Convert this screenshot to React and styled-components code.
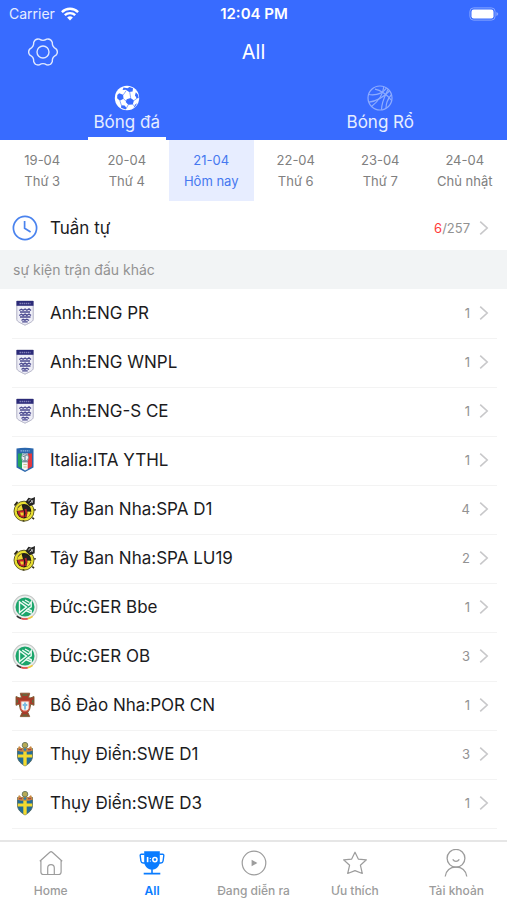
import React, { useState } from "react";
import styled, { createGlobalStyle } from "styled-components";

const colors = {
  primary: "#386bff",
  active: "#0a7cff",
  today: "#4678f0",
  todayBg: "#e7edff",
  text: "#1c1c1e",
  muted: "#808080",
  faint: "#929292",
  line: "#f3f3f3",
  section: "#f2f4f5",
  danger: "#ff3b3b",
};

const days = [
  { date: "19-04", label: "Thứ 3" },
  { date: "20-04", label: "Thứ 4" },
  { date: "21-04", label: "Hôm nay" },
  { date: "22-04", label: "Thứ 6" },
  { date: "23-04", label: "Thứ 7" },
  { date: "24-04", label: "Chủ nhật" },
];

const leagues = [
  { crest: "england", name: "Anh:ENG PR", count: 1 },
  { crest: "england", name: "Anh:ENG WNPL", count: 1 },
  { crest: "england", name: "Anh:ENG-S CE", count: 1 },
  { crest: "italy", name: "Italia:ITA YTHL", count: 1 },
  { crest: "spain", name: "Tây Ban Nha:SPA D1", count: 4 },
  { crest: "spain", name: "Tây Ban Nha:SPA LU19", count: 2 },
  { crest: "germany", name: "Đức:GER Bbe", count: 1 },
  { crest: "germany", name: "Đức:GER OB", count: 3 },
  { crest: "portugal", name: "Bồ Đào Nha:POR CN", count: 1 },
  { crest: "sweden", name: "Thụy Điển:SWE D1", count: 3 },
  { crest: "sweden", name: "Thụy Điển:SWE D3", count: 1 },
];

/* ---------- header icons ---------- */

const polar = (radius, deg) => {
  const a = (deg * Math.PI) / 180;
  return `${(15 + radius * Math.cos(a)).toFixed(2)} ${(15 + radius * Math.sin(a)).toFixed(2)}`;
};

// six rounded teeth with a shallow dip between each pair
const gearPath =
  [0, 60, 120, 180, 240, 300]
    .map(
      (deg, i) =>
        `${i === 0 ? `M${polar(13.4, deg - 14)}` : ""} A5 5 0 0 1 ${polar(13.4, deg + 14)} Q${polar(10.4, deg + 30)} ${polar(13.4, deg + 46)}`
    )
    .join(" ") + "Z";

const GearIcon = () => (
  <svg width="30" height="30" viewBox="0 0 30 30" fill="none" stroke="#dfe8ff" strokeWidth="1.4">
    <path d={gearPath} strokeLinejoin="round" />
    <circle cx="15" cy="15" r="6" />
  </svg>
);

const WifiIcon = () => (
  <svg width="18" height="14" viewBox="0 0 18 14" fill="none" stroke="#fff" strokeWidth="2.4">
    <path d="M0.9 5.1a11.6 11.6 0 0 1 16.2 0" />
    <path d="M3.8 8.2a7.5 7.5 0 0 1 10.4 0" />
    <path d="M9 13.6l-2.9-3a4.2 4.2 0 0 1 5.8 0z" fill="#fff" stroke="none" />
  </svg>
);

const BatteryIcon = () => (
  <svg width="30" height="14" viewBox="0 0 30 14" fill="none">
    <rect x="0.9" y="0.9" width="25.2" height="12.2" rx="3.6" stroke="#86a5ff" />
    <rect x="2.5" y="2.5" width="22" height="9" rx="2.2" fill="#fff" />
    <path d="M27.4 5v4c1.3-.5 1.8-1.2 1.8-2s-.5-1.5-1.8-2z" fill="#86a5ff" />
  </svg>
);

const FootballIcon = () => (
  <svg width="26" height="26" viewBox="0 0 26 26">
    <circle cx="13" cy="13" r="12.2" fill="#fff" />
    <g fill={colors.primary}>
      <path d="M12.7 14.2l4-1.3 3.3 2.6-1.3 4.1-4.5.2-2.5-2.7z" />
      <path d="M9.5 2.4l4 .8 2-1.2 3.5 1.2-.4 3.2-3.5.7-3.3-2.4-3.2.4z" />
      <path d="M5.2 8.3l3.9 1.5.4 3.9-3.6 2.1-2.8-2.6.2-3.1z" />
      <path d="M21.8 7.2l2.3 2.6.6 3.2-2 .5-1.7-3.3z" />
      <path d="M7.2 20.3l3.4.3 2.2 2.6-1.4 1.3-4.3-1.8z" />
      <path d="M21.6 19.2l1.7-1.3-1.9 3.4-2 1.4z" />
    </g>
    <path
      d="M9.3 9.9l2.8-4.2M9.4 13.8l2.5 2M16.7 12.9l-1-6M20 15.5l3-2.2M14.2 19.8l-1.7 3.2M5.9 15.8l1.5 4.5M18.6 19.6l2 1.3"
      stroke={colors.primary}
      strokeWidth=".6"
      fill="none"
    />
  </svg>
);

const BasketballIcon = () => (
  <svg width="26" height="26" viewBox="0 0 26 26" fill="none" stroke="#8eacff" strokeWidth="1.2">
    <circle cx="13" cy="13" r="12" />
    <path d="M1.5 9.5C9 10.5 16 8 19.5 3.2" />
    <path d="M2 17.2C11 16 18 10.5 22.4 6" />
    <path d="M4.5 21.5C11 16.5 16 11 16.8 1.8" />
    <path d="M8 4.2C13 5 20.5 9.5 24.6 15.5" />
    <path d="M14.5 24.8C14.5 17 17.5 12 21 4.5" />
    <path d="M19 23.2c0-5 1.5-9 5.2-13.2" />
  </svg>
);

/* ---------- list icons ---------- */

const ClockIcon = () => (
  <svg width="26" height="26" viewBox="0 0 26 26" fill="none" stroke="#4a83ee" strokeWidth="1.7">
    <circle cx="13" cy="13" r="11.6" />
    <path d="M12.6 6v7.3l6 3.7" />
  </svg>
);

const ChevronIcon = () => (
  <svg width="10" height="16" viewBox="0 0 10 16" fill="none" stroke="#c8c8ca" strokeWidth="1.6">
    <path d="M1.2 1.6L8.2 8l-7 6.400" />
  </svg>
);

const EnglandCrest = () => (
  <svg width="26" height="26" viewBox="0 0 26 26">
    <path d="M4.8 1h16.4v18.5c0 2-3.700 3.500-8.200 5.700-4.500-2.200-8.200-3.700-8.200-5.700z" fill="#eeeef7" stroke="#b0b0c4" strokeWidth="1" />
    <path d="M4.5 1h17v4.800h-17z" fill="#2b2a78" />
    <path d="M7.5 3.500h11" stroke="#8583bb" strokeWidth="1.300" strokeDasharray="1.500 .6" />
    <g stroke="#4a498f" strokeWidth="1.300" fill="none">
      <path d="M7.200 10.500l2.200-1.300 1.700 1 2-1.200 1.800 1.300 2.100-1.400 2 1.600M8 12h10" />
      <path d="M7.200 15.500l2.200-1.300 1.700 1.200 2-1.300 1.800 1.300 2.100-1.400 2 1.600M8 17h10.500" />
      <path d="M9.500 20.600l1.600-1.300 1.900.9 1.900-1 2.100 1.300M10.200 21.900h5.500" />
    </g>
  </svg>
);

const ItalyCrest = () => (
  <svg width="26" height="26" viewBox="0 0 26 26">
    <path d="M4.500 1.500Q13 .2 21.500 1.500v19L13 25l-8.500-4.500z" fill="#2b67ad" />
    <path d="M6 6.500h5V22l-5-2.600z" fill="#23a55b" />
    <path d="M10 6.500h6V22L13 23.500 10 21.500z" fill="#f5f7f5" />
    <path d="M15.700 6.500H20v13L15.700 22z" fill="#e2383f" />
    <path d="M8.500 3.900h9" stroke="#8fb6df" strokeWidth="1.300" strokeDasharray="1.500 .6" />
    <circle cx="13" cy="10.500" r="3.600" fill="#edf2f3" stroke="#5b7f91" strokeWidth=".8" />
    <path d="M10.800 9.500l3.800-1M13 9.500v4.500M10 14.800h6" stroke="#557083" strokeWidth="1" />
    <path d="M11.400 17.500h3.400M11.600 20h3" stroke="#c9bd83" strokeWidth=".9" />
  </svg>
);

const SpainCrest = () => (
  <svg width="26" height="26" viewBox="0 0 26 26">
    <circle cx="12" cy="15.200" r="10" fill="#e9df31" stroke="#55501c" strokeWidth=".9" />
    <circle cx="12" cy="15.200" r="7.200" fill="#1e1a18" />
    <path d="M5.500 12.500l4-3.900 1.500 5.600-5.800.7z" fill="#f0d934" />
    <path d="M11.500 8.700l6.500 2.600.4 4.400-6.900-1.200z" fill="#262220" />
    <path d="M5.500 15l6.500-.6v7.300c-3.500 0-6-2.500-6.500-6.700z" fill="#c3242b" />
    <path d="M15.500 15.500l3.500.3-2.100 4.800-2.600 1z" fill="#f2dd31" />
    <path d="M8 16.500h3.500v3H9z" fill="#ecd42f" />
    <path d="M13.500 13l1 4.500-1.500 3.500" stroke="#b5202b" strokeWidth="1.900" fill="none" />
    <path d="M13.500 6l3-4.200 3 .6 3.500-1.400-.4 7.300-4.900 2z" fill="#242424" />
    <path d="M16.300 5l2.300-1.900M17.700 7.200l3.500-2.700M19.600 4l.8 2.800" stroke="#d9d9d9" strokeWidth=".9" />
    <path d="M2.500 9.500l3-3.600M22.200 13.600l1.500.4M20.300 21.700l1.700 1.500M11.500 24.200v1.300" stroke="#302b16" strokeWidth="1.700" />
  </svg>
);

const GermanyCrest = () => (
  <svg width="26" height="26" viewBox="0 0 26 26">
    <circle cx="13" cy="13" r="11.800" fill="#eceeed" stroke="#c4c8c6" strokeWidth="1.200" />
    <circle cx="13" cy="13" r="9.500" fill="#1ba56b" />
    <g fill="none" stroke="#eefaf4" strokeWidth="1.400">
      <path d="M7.500 8v10.500l7-5.400z" />
      <path d="M10.300 7.200l6.400 4.200 2.500-3.600v5l-3.800 2.400 3.800 1.300v2.500l-5.500-2.400" />
      <path d="M9.500 20.500l5.700-4.800M13 6l4.500 2.500" />
    </g>
    <path d="M4.800 22.200a12 12 0 0 0 4.500 2.300" stroke="#333" strokeWidth="1.500" fill="none" />
    <path d="M9.300 24.500a12 12 0 0 0 6.500.2" stroke="#e23b3b" strokeWidth="1.500" fill="none" />
    <path d="M15.800 24.700a12 12 0 0 0 4.800-2.300" stroke="#f0c93c" strokeWidth="1.500" fill="none" />
  </svg>
);

const PortugalCrest = () => (
  <svg width="26" height="26" viewBox="0 0 26 26">
    <path
      d="M8.300 1.200h9.400L16.500 5.800h2.300l3.200-1.300v8.800l-3.200-1.200-1.100 5.200-1.900 3 1.900 4.300H8.300l1.900-4.300-1.900-3-1.100-5.200L4 13.300V4.500l3.200 1.300h2.300z"
      fill="#a93a29"
      stroke="#7b5c32"
      strokeWidth=".9"
    />
    <path d="M10.300 3h5.400M10.500 23.200h5M5.300 7.700v3M20.700 7.700v3" stroke="#547441" strokeWidth="1.300" />
    <path d="M8.700 9h8.600v6.800c0 2.100-1.900 3.400-4.300 3.400s-4.300-1.300-4.300-3.400z" fill="#f4f4ef" stroke="#d05443" strokeWidth="1.200" />
    <path d="M13 10.400v7.200M10.700 13h4.600" stroke="#7cbbe2" strokeWidth="1.900" />
  </svg>
);

const SwedenCrest = () => (
  <svg width="26" height="26" viewBox="0 0 26 26">
    <path d="M5.500 7.500h15v8c0 4.500-4 7.500-7.500 9.500-3.500-2-7.500-5-7.500-9.500z" fill="#236d99" stroke="#45564b" strokeWidth=".7" />
    <path d="M11.300 8.500h3.400v15.600L13 25l-1.700-.9z" fill="#f3d92f" />
    <path d="M5.800 13.500h14.400v3H5.800z" fill="#f3d92f" />
    <path d="M5 9.500l2-4.500 3 2.500L13 6l3 1.500L19 5l2 4.500-4 1.200H9z" fill="#c98a43" />
    <path d="M7 8.700h3M16 8.700h3" stroke="#a3444a" strokeWidth="1.300" />
    <circle cx="13" cy="4.200" r="2.800" fill="#b6aa55" stroke="#6f7d62" strokeWidth="1" />
    <path d="M11.200 8.600L13 7l1.800 1.600L13 10.300z" fill="#2e83a8" />
  </svg>
);

const crests = {
  england: EnglandCrest,
  italy: ItalyCrest,
  spain: SpainCrest,
  germany: GermanyCrest,
  portugal: PortugalCrest,
  sweden: SwedenCrest,
};

/* ---------- tab bar icons ---------- */

const HomeIcon = () => (
  <svg width="28" height="28" viewBox="0 0 28 28" fill="none" stroke="currentColor" strokeWidth="1.200">
    <path d="M2.800 12.200L12.800 3.200c.8-.7 1.700-.7 2.500 0l9.900 9M3.900 11.200v11.800c0 1.500.9 2.500 2.500 2.500h15.200c1.600 0 2.500-1 2.500-2.500V11.200" />
    <path d="M10.700 25.300v-6.400c0-2 1.300-3.300 3.300-3.300s3.300 1.300 3.300 3.300v6.400" />
  </svg>
);

const TrophyIcon = () => (
  <svg width="28" height="28" viewBox="0 0 28 28" fill="none" stroke="currentColor" strokeWidth="1.400">
    <path d="M6.200 2.300h15.600v10.400c0 4.200-3.300 7.800-7.800 7.800s-7.800-3.600-7.800-7.800z" fill="currentColor" stroke="none" />
    <path d="M6.500 5.300H3.300c-.8 0-1.200.5-1.100 1.200l.7 5.500c.2 1.300 1 2 2.200 2h2M21.500 5.300h3.200c.8 0 1.200.5 1.100 1.200l-.7 5.500c-.2 1.300-1 2-2.200 2h-2" />
    <path d="M14 20v4.500M5.700 24.600h16.600" strokeWidth="1.600" />
    <path d="M9.600 8v5.200" stroke="#fff" strokeWidth="1.600" />
    <path d="M12.300 9.300v.1M12.300 12v.1" stroke="#fff" strokeWidth="1.200" strokeLinecap="round" />
    <ellipse cx="16.900" cy="10.600" rx="2.100" ry="2.100" stroke="#fff" strokeWidth="1.500" />
  </svg>
);

const PlayIcon = () => (
  <svg width="28" height="28" viewBox="0 0 28 28" fill="none" stroke="currentColor" strokeWidth="1.200">
    <circle cx="14" cy="14" r="11.800" />
    <path d="M12.200 11.700v4.600l4-2.300z" fill="currentColor" />
  </svg>
);

const StarIcon = () => (
  <svg width="28" height="28" viewBox="0 0 28 28" fill="none" stroke="currentColor" strokeWidth="1.200">
    <path d="M14 3.200l3.300 6.900 8.100.7-6 5.400 1.900 8.300L14 21.600l-7.300 2.900 1.900-8.300-6-5.400 8.100-.7z" strokeLinejoin="round" />
  </svg>
);

const UserIcon = () => (
  <svg width="28" height="28" viewBox="0 0 28 28" fill="none" stroke="currentColor" strokeWidth="1.300">
    <circle cx="14" cy="9.300" r="8.900" />
    <path d="M10.700 10.300c1 1.500 2 2 3.300 2s2.300-.5 3.300-2" />
    <path d="M3.200 27.500c1-5.800 5-9.300 10.800-9.300s9.800 3.500 10.800 9.300" />
  </svg>
);

const navItems = [
  { id: "home", label: "Home", Icon: HomeIcon },
  { id: "all", label: "All", Icon: TrophyIcon },
  { id: "live", label: "Đang diễn ra", Icon: PlayIcon },
  { id: "favorite", label: "Ưu thích", Icon: StarIcon },
  { id: "account", label: "Tài khoản", Icon: UserIcon },
];

function Header({ sport, setSport }) {
  return (
    <HeaderWrapper>
      <StatusBar>
        <Carrier>
          Carrier <WifiIcon />
        </Carrier>
        <Time>12:04 PM</Time>
        <Battery>
          <BatteryIcon />
        </Battery>
      </StatusBar>
      <TitleBar>
        <IconButton type="button" aria-label="Settings">
          <GearIcon />
        </IconButton>
        <h1>All</h1>
      </TitleBar>
      <SportTabs>
        <SportTab type="button" $active={sport === "football"} onClick={() => setSport("football")}>
          <FootballIcon />
          <span>Bóng đá</span>
        </SportTab>
        <SportTab type="button" $active={sport === "basketball"} onClick={() => setSport("basketball")}>
          <BasketballIcon />
          <span>Bóng Rổ</span>
        </SportTab>
      </SportTabs>
    </HeaderWrapper>
  );
}

function League({ crest, name, count }) {
  const Crest = crests[crest];
  return (
    <li>
      <Row href="#league">
        <Crest />
        <RowName>{name}</RowName>
        <Count>{count}</Count>
        <ChevronIcon />
      </Row>
    </li>
  );
}

function App() {
  const [sport, setSport] = useState("football");
  const [day, setDay] = useState("21-04");
  const [page, setPage] = useState("all");

  return (
    <Screen>
      <GlobalStyle />
      <Header sport={sport} setSport={setSport} />
      <Days>
        {days.map(({ date, label }) => (
          <Day key={date} type="button" $active={day === date} onClick={() => setDay(date)}>
            <span>{date}</span>
            <span>{label}</span>
          </Day>
        ))}
      </Days>
      <Content>
        <Summary href="#order">
          <ClockIcon />
          <RowName>Tuần tự</RowName>
          <Count>
            <em>6</em>/257
          </Count>
          <ChevronIcon />
        </Summary>
        <SectionTitle>sự kiện trận đấu khác</SectionTitle>
        <LeagueList>
          {leagues.map((league) => (
            <League key={league.name} {...league} />
          ))}
        </LeagueList>
      </Content>
      <BottomNav>
        {navItems.map(({ id, label, Icon }) => (
          <NavLink key={id} href={`#${id}`} $active={page === id} onClick={() => setPage(id)}>
            <Icon />
            {label}
          </NavLink>
        ))}
      </BottomNav>
    </Screen>
  );
}

export default App;

const GlobalStyle = createGlobalStyle`
  * {
    box-sizing: border-box;
  }
  body {
    margin: 0;
    background-color: #fff;
    color: ${colors.text};
    font-family: Inter, "Noto Sans", sans-serif;
  }
  button {
    border: none;
    padding: 0;
    background-color: transparent;
    font-family: inherit;
    cursor: pointer;
  }
  a {
    color: inherit;
    text-decoration: none;
  }
  svg {
    display: block;
    flex-shrink: 0;
  }
`;

const Screen = styled.div`
  height: 100vh;
  display: flex;
  flex-direction: column;
`;

const HeaderWrapper = styled.header`
  background-color: ${colors.primary};
  color: #fff;
`;

const StatusBar = styled.div`
  height: 27px;
  padding: 0 8px 0 9px;
  display: grid;
  grid-template-columns: 1fr auto 1fr;
  align-items: center;
  font-size: 14px;
`;

const Carrier = styled.div`
  display: flex;
  align-items: center;
  gap: 6px;
  color: #e6edff;
`;

const Time = styled.div`
  font-size: 15px;
  font-weight: 600;
`;

const Battery = styled.div`
  justify-self: end;
`;

const TitleBar = styled.div`
  height: 50px;
  padding: 0 28px;
  display: grid;
  grid-template-columns: 1fr auto 1fr;
  align-items: center;

  h1 {
    margin: 0;
    font-size: 20px;
    font-weight: 400;
  }
`;

const IconButton = styled.button`
  justify-self: start;
`;

const SportTabs = styled.div`
  display: flex;
`;

const SportTab = styled.button`
  flex: 1;
  height: 63px;
  padding-top: 8px;
  display: flex;
  flex-direction: column;
  align-items: center;
  color: #e6edff;
  font-size: 17px;
  line-height: 22px;

  &::after {
    content: "";
    width: 78px;
    height: 3px;
    margin-top: auto;
    background-color: ${({ $active }) => ($active ? "#fff" : "transparent")};
  }
`;

const Days = styled.div`
  padding-bottom: 4px;
  display: flex;
`;

const Day = styled.button`
  flex: 1 1 0;
  padding: 10px 0 9px;
  display: flex;
  flex-direction: column;
  align-items: center;
  background-color: ${({ $active }) => ($active ? colors.todayBg : "transparent")};
  color: ${({ $active }) => ($active ? colors.today : colors.muted)};
  font-size: 13px;
  line-height: 21px;
`;

const Content = styled.main`
  flex: 1;
  min-height: 0;
  overflow-y: auto;
  scrollbar-width: none;
`;

const Row = styled.a`
  height: 49px;
  padding: 0 8px 2px 0;
  display: flex;
  align-items: center;
  border-bottom: 1px solid ${colors.line};
`;

const Summary = styled(Row)`
  height: 45px;
  padding: 0 18px 0 12px;
  border-bottom: none;
`;

const RowName = styled.span`
  flex: 1;
  margin-left: 12px;
  font-size: 17px;
`;

const Count = styled.span`
  margin-right: 9px;
  color: ${colors.faint};
  font-size: 13px;

  em {
    color: ${colors.danger};
    font-style: normal;
  }
`;

const SectionTitle = styled.h2`
  height: 39px;
  margin: 0;
  padding: 0 13px;
  background-color: ${colors.section};
  color: ${colors.faint};
  font-size: 14px;
  font-weight: 400;
  line-height: 39px;
`;

const LeagueList = styled.ul`
  margin: 0;
  padding: 1px 10px 0 12px;
  list-style: none;
`;

const BottomNav = styled.nav`
  height: 60px;
  padding-top: 7px;
  display: flex;
  border-top: 2px solid #e6e6e6;
  background-color: #fff;
`;

const NavLink = styled.a`
  flex: 1 1 0;
  display: flex;
  flex-direction: column;
  align-items: center;
  gap: 6px;
  color: ${({ $active }) => ($active ? colors.active : "#9c9c9c")};
  font-size: 12px;
  font-weight: ${({ $active }) => ($active ? 600 : 500)};
  line-height: 16px;
`;
